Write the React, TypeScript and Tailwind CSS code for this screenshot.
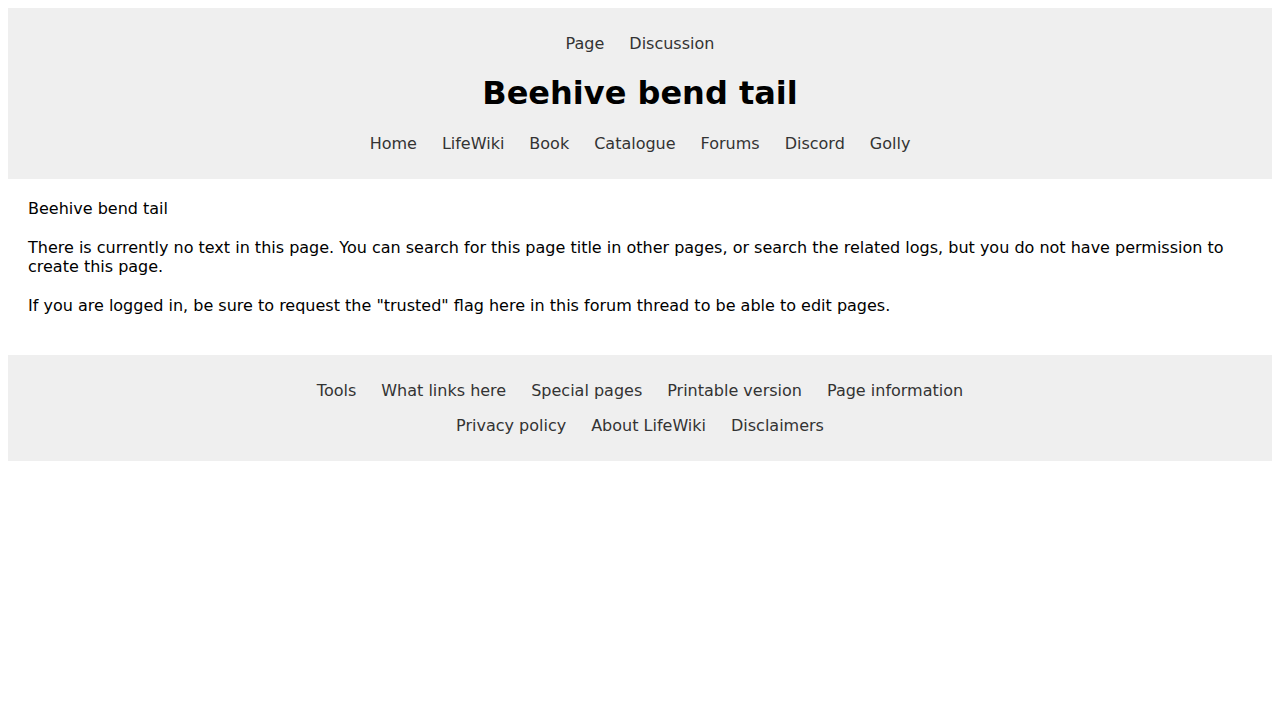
import React from "react";

const font = { fontFamily: '"DejaVu Sans", sans-serif' };

function LinkRow({ items, className = "" }: { items: string[]; className?: string }) {
  return (
    <div className={`flex justify-center gap-[25px] text-[16px] leading-[19px] text-[#333333] ${className}`}>
      {items.map((t) => (
        <a key={t} className="cursor-pointer">
          {t}
        </a>
      ))}
    </div>
  );
}

export default function App() {
  return (
    <div className="bg-white p-[8px] min-h-[720px] text-black" style={font}>
      <header className="bg-[#efefef] pt-[26px] pb-[26px] flex flex-col items-center">
        <LinkRow items={["Page", "Discussion"]} />
        <h1 className="mt-[22px] text-[32px] leading-[37px] font-bold text-black">Beehive bend tail</h1>
        <LinkRow items={["Home", "LifeWiki", "Book", "Catalogue", "Forums", "Discord", "Golly"]} className="mt-[22px]" />
      </header>
      <main className="px-[20px] pt-[20px] pb-[40px] text-[16px] leading-[19px]">
        <div>Beehive bend tail</div>
        <p className="mt-[20px]">
          There is currently no text in this page. You can search for this page title in other pages, or search the related logs, but you do not have permission to create this page.
        </p>
        <p className="mt-[20px]">
          If you are logged in, be sure to request the "trusted" flag here in this forum thread to be able to edit pages.
        </p>
      </main>
      <footer className="bg-[#efefef] pt-[26px] pb-[26px] flex flex-col items-center">
        <LinkRow items={["Tools", "What links here", "Special pages", "Printable version", "Page information"]} />
        <LinkRow items={["Privacy policy", "About LifeWiki", "Disclaimers"]} className="mt-[16px]" />
      </footer>
    </div>
  );
}
